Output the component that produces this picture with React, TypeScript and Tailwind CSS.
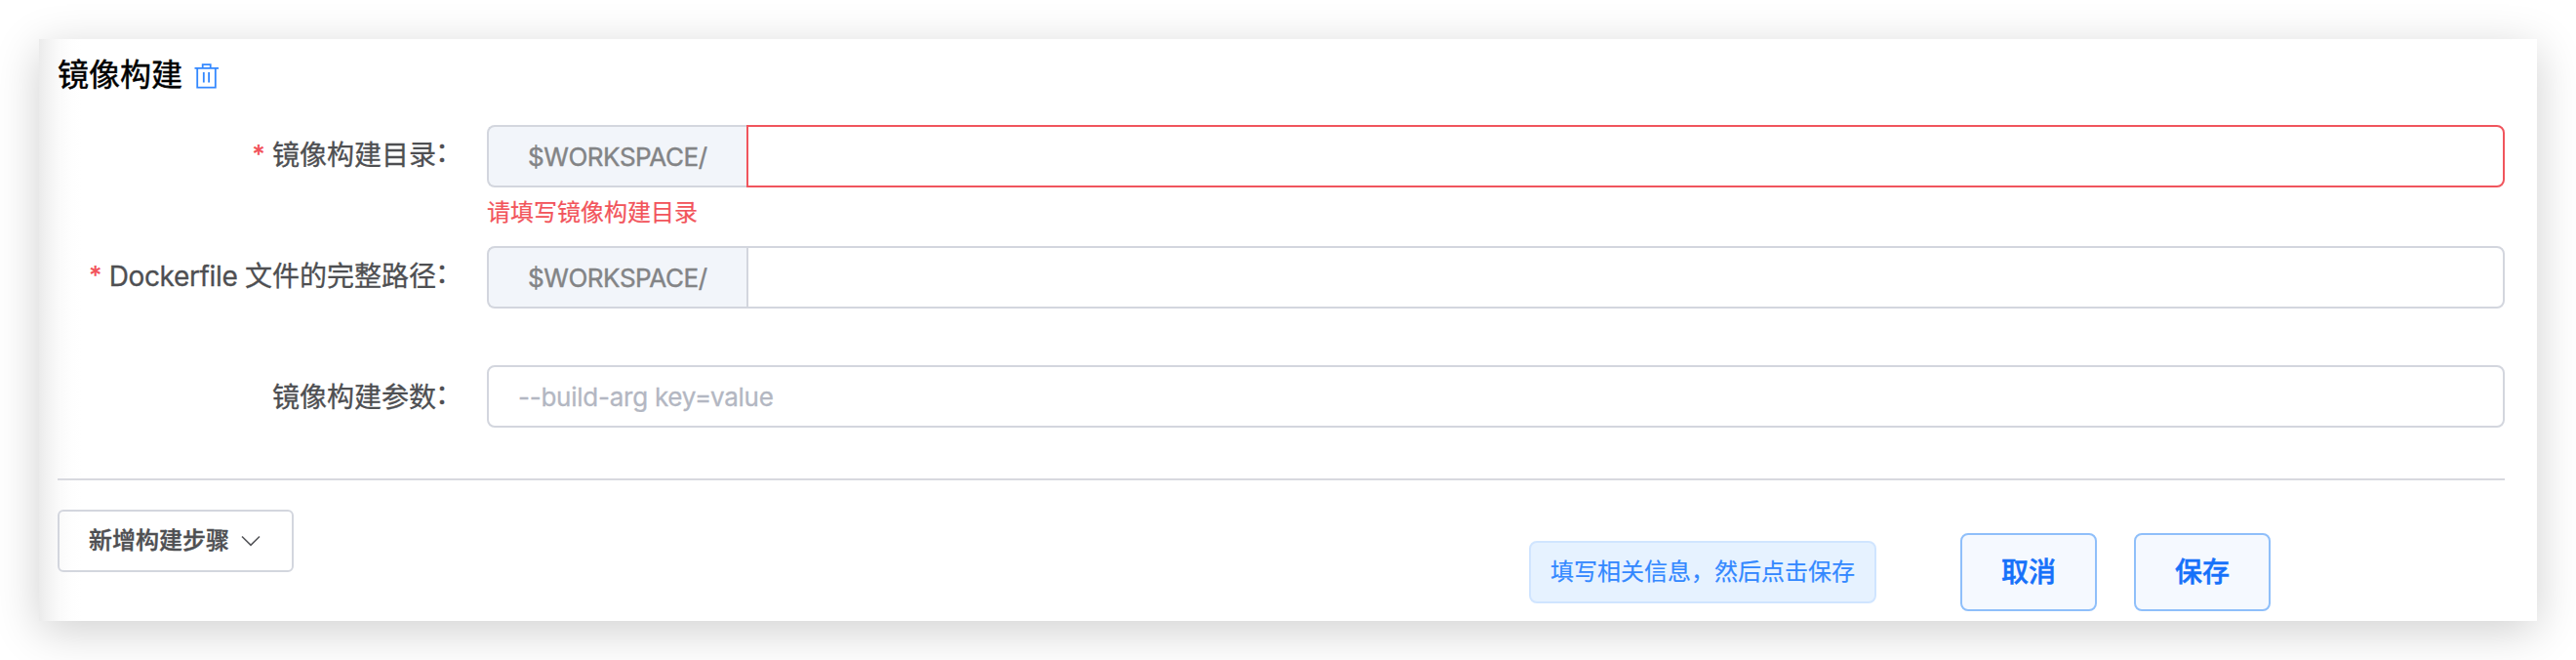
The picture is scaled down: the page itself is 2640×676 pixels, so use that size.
import type { ReactNode } from "react";

function Label({ children, required }: { children: ReactNode; required?: boolean }) {
  return (
    <label className="flex h-[62px] w-[440px] shrink-0 items-center justify-end pr-6 text-[28px] whitespace-pre text-[#4e4f52] [-webkit-text-stroke:0.3px_#4e4f52]">
      {required && (
        <span className="mr-[7px] pb-0.5 text-[26px] leading-none font-semibold text-[#f2545b] [-webkit-text-stroke:0]">*</span>
      )}
      <span>{children}</span>
      <span className="-ml-px mr-px pb-1.5">：</span>
    </label>
  );
}

function WorkspaceInput({ error }: { error?: boolean }) {
  return (
    <div className="flex h-16 w-full">
      <span className="flex w-[266px] shrink-0 items-center rounded-l-lg border-2 border-r-0 border-[#d3d6de] bg-[#f2f5fa] pl-10 text-[26px] tracking-[-0.45px] text-[#838486] [-webkit-text-stroke:0.4px_#838486]">
        $WORKSPACE/
      </span>
      <input
        className={
          error
            ? "min-w-0 flex-1 rounded-r-lg border-2 border-[#f0555d] bg-white px-[30px] outline-none"
            : "min-w-0 flex-1 rounded-r-lg border-2 border-[#d3d6de] bg-white px-[30px] outline-none"
        }
      />
    </div>
  );
}

function TrashIcon() {
  return (
    <svg width="26" height="26" viewBox="0 0 26 26" fill="none" stroke="#3388ff" strokeWidth="1.8">
      <path d="M0.5 4.8H25M8.7 4.8V1.2H16.7V4.8M3.2 4.8V24.6H21.8V4.8M9.8 9V19.4M15.1 9V19.4" />
    </svg>
  );
}

function ActionButton({ children }: { children: ReactNode }) {
  return (
    <button className="h-20 w-[140px] rounded-lg border-2 border-[#8fbffa] bg-[#f5f9ff] text-[28px] font-medium text-[#1671fa] [-webkit-text-stroke:0.5px_#1671fa]">
      {children}
    </button>
  );
}

export default function App() {
  return (
    <div className="h-[676px] w-[2640px] overflow-hidden bg-white p-10 font-['Inter','Noto_Sans_CJK_SC',sans-serif]">
      <section className="h-[596px] bg-[linear-gradient(to_right,#ebebeb_0px,#f2f2f2_8px,#fafafa_20px,#fefefe_34px,#ffffff_44px)] pr-[33px] pl-[19px] shadow-[0_10px_44px_rgba(0,0,0,0.19)]">
        <header className="flex h-[88px] items-start gap-3">
          <h2 className="pt-[13px] text-[32px] leading-[48px] font-normal text-black [-webkit-text-stroke:0.5px_black]">镜像构建</h2>
          <span className="pt-[25px]"><TrashIcon /></span>
        </header>

        <div className="flex h-[124px]">
          <Label required>镜像构建目录</Label>
          <div className="flex flex-1 flex-col">
            <WorkspaceInput error />
            <p className="pt-2 text-2xl leading-9 text-[#f2545b] [-webkit-text-stroke:0.2px_#f2545b]">请填写镜像构建目录</p>
          </div>
        </div>
        <div className="flex h-[122px] items-start">
          <Label required>
            <span className="tracking-[-0.35px]">Dockerfile </span>文件的完整路径
          </Label>
          <WorkspaceInput />
        </div>
        <div className="flex h-[116px] items-start">
          <div className="pt-0.5">
            <Label>镜像构建参数</Label>
          </div>
          <input
            placeholder="--build-arg key=value"
            className="h-16 min-w-0 flex-1 rounded-lg border-2 border-[#d3d6de] bg-white px-[30px] text-[26px] tracking-[-0.25px] outline-none placeholder:text-[#b3b7c2] [-webkit-text-stroke:0.3px_#b3b7c2]"
          />
        </div>
        <hr className="border-t-2 border-[#d8d9df]" />

        <footer className="flex items-start pt-[30px]">
          <button className="flex h-16 w-[242px] items-center rounded-md border-2 border-[#d3d6de] pl-[30px] text-2xl font-medium text-[#4e4f52] [-webkit-text-stroke:0.4px_#4e4f52]">
            新增构建步骤
            <svg className="ml-3" width="20" height="12" viewBox="0 0 20 12" fill="none" stroke="#55565a" strokeWidth="1.6">
              <path d="M1 1.5L10 10.3L19 1.5" />
            </svg>
          </button>
          <div className="mt-8 ml-[1266px] flex h-16 w-[356px] items-center justify-center rounded-lg border-2 border-[#d0e5ff] bg-[#e6f2ff] text-2xl whitespace-nowrap text-[#3388ff] [-webkit-text-stroke:0.2px_#3388ff]">
            填写相关信息，然后点击保存
          </div>
          <div className="mt-6 ml-[86px] flex gap-[38px]">
            <ActionButton>取消</ActionButton>
            <ActionButton>保存</ActionButton>
          </div>
        </footer>
      </section>
    </div>
  );
}
